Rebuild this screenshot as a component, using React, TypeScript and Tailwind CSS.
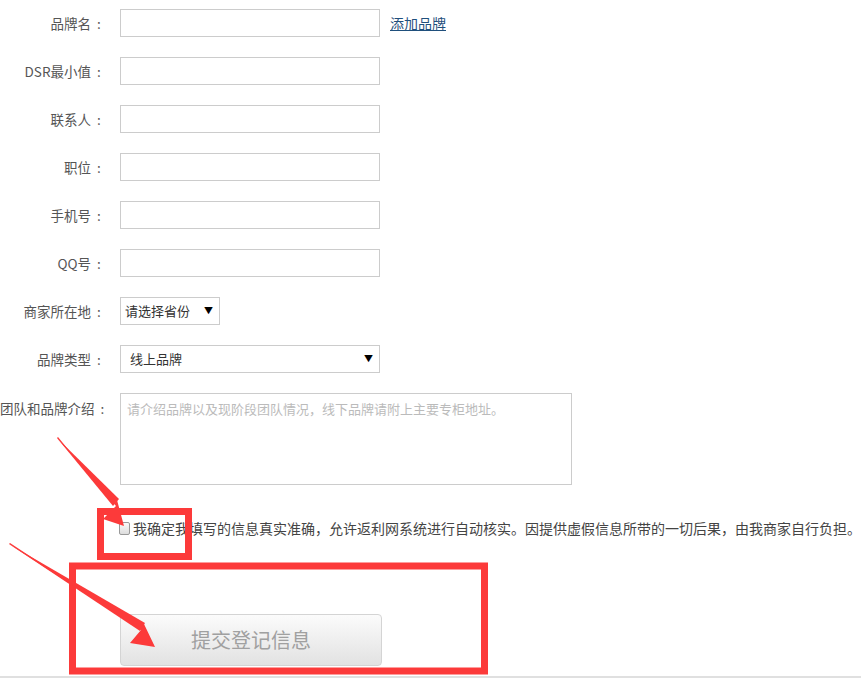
import type { ReactNode } from "react";

// ── Form row ────────────────────────────────────────────

function Row({ label, children, top }: { label: string; children: ReactNode; top?: boolean }) {
  return (
    <div className={`flex ${top ? "items-start" : "items-center"} mb-[20px]`}>
      <div
        className={`w-[104px] shrink-0 text-right text-[13.5px] text-[#555] whitespace-nowrap ${top ? "pt-[5px]" : ""}`}
      >
        {label}
        <span className="inline-block w-[13px] pl-[6px] text-left">:</span>
      </div>
      <div className="ml-[16px] flex items-center">{children}</div>
    </div>
  );
}

function TextInput() {
  return <div className="h-[28px] w-[260px] border border-[#ccc] bg-white" />;
}

function Select({ text, width, pad }: { text: string; width: string; pad: string }) {
  return (
    <div
      className={`flex h-[28px] ${width} items-center justify-between border border-[#ccc] bg-white ${pad} pr-[6px] text-[13px] text-[#333]`}
    >
      <span>{text}</span>
      <span className="text-[9px] text-black">▼</span>
    </div>
  );
}

// ── Annotations drawn on top ────────────────────────────

function Annotations() {
  return (
    <svg className="pointer-events-none absolute left-0 top-0" width="861" height="680">
      <rect x="100.5" y="511.5" width="88" height="45" fill="none" stroke="#fc3a3a" strokeWidth="7" />
      <rect x="72.5" y="566" width="412" height="105" fill="none" stroke="#fc3a3a" strokeWidth="7" />
      {/* arrow 1 */}
      <polygon points="57,438 116,506 103,519 124,526 117,500 112,503 58,437" fill="#fc3a3a" />
      <polygon points="57,438 119,499 113,506" fill="#fc3a3a" />
      {/* arrow 2 */}
      <polygon points="9,544 141,630 130,643 155,647 144,624 139,628 10,543" fill="#fc3a3a" />
      <polygon points="9,544 145,623 140,631" fill="#fc3a3a" />
    </svg>
  );
}

// ── Page ────────────────────────────────────────────────

export default function App() {
  return (
    <div
      className="relative h-[680px] w-[861px] overflow-hidden bg-white"
      style={{ fontFamily: '"Noto Sans CJK SC", "Liberation Sans", sans-serif' }}
    >
      <div className="pt-[9px]">
        <Row label="品牌名">
          <TextInput />
          <a className="ml-[10px] text-[14px] text-[#1f4f7c] underline">添加品牌</a>
        </Row>
        <Row label="DSR最小值">
          <TextInput />
        </Row>
        <Row label="联系人">
          <TextInput />
        </Row>
        <Row label="职位">
          <TextInput />
        </Row>
        <Row label="手机号">
          <TextInput />
        </Row>
        <Row label="QQ号">
          <TextInput />
        </Row>
        <Row label="商家所在地">
          <Select text="请选择省份" width="w-[100px]" pad="pl-[4px]" />
        </Row>
        <Row label="品牌类型">
          <Select text="线上品牌" width="w-[260px]" pad="pl-[9px]" />
        </Row>
        <Row label="团队和品牌介绍" top>
          <div className="h-[92px] w-[452px] border border-[#ccc] bg-white px-[6px] py-[5px] text-[13px] text-[#bbb]">
            请介绍品牌以及现阶段团队情况，线下品牌请附上主要专柜地址。
          </div>
        </Row>

        <div className="ml-[119px] mt-[33px] flex items-center">
          <span className="h-[13px] w-[13px] rounded-[2px] border border-[#999] bg-gradient-to-b from-[#fafafa] to-[#ddd]" />
          <span className="ml-[3px] whitespace-nowrap text-[14px] text-[#444]">
            我确定我填写的信息真实准确，允许返利网系统进行自动核实。因提供虚假信息所带的一切后果，由我商家自行负担。
          </span>
        </div>

        <div className="ml-[120px] mt-[75px] flex h-[52px] w-[262px] items-center justify-center rounded-[4px] border border-[#d4d4d4] bg-gradient-to-b from-[#fbfbfb] to-[#e2e2e2] text-[20px] text-[#a0a0a0]">
          提交登记信息
        </div>
      </div>

      <div className="absolute bottom-[2px] left-0 h-[2px] w-full bg-[#e0e0e0]" />
      <Annotations />
    </div>
  );
}
